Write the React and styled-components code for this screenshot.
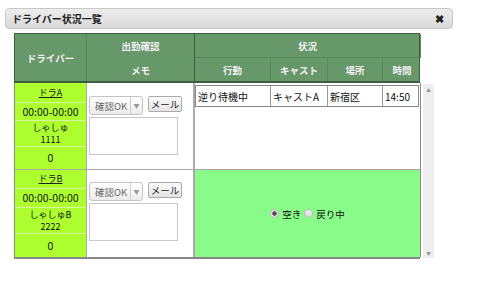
import React from "react";
import styled, { createGlobalStyle } from "styled-components";

const GlobalStyle = createGlobalStyle`
  body {
    margin: 0;
    background: #fff;
    font-family: "Noto Sans CJK JP", "Liberation Sans", sans-serif;
    font-size: 10px;
    color: #222;
  }
`;

const COLS = "72px 108px 76px 57px 55px 38px";

const Styled = {
  Page: styled.div`
    width: 500px;
    height: 300px;
    padding-top: 8px;
    box-sizing: border-box;
  `,
  TitleBar: styled.div`
    display: flex;
    align-items: center;
    justify-content: space-between;
    margin: 0 47px 0 5px;
    height: 21px;
    box-sizing: border-box;
    padding: 0 8px 0 6px;
    border: 1px solid #c8c8c8;
    border-radius: 4px;
    background: linear-gradient(#ededed, #d9d9d9);
    font-weight: bold;
    font-size: 10px;
    color: #222;
  `,
  Close: styled.span`
    font-size: 11px;
    font-weight: bold;
    line-height: 1;
  `,
  Content: styled.div`
    padding: 4px 0 0 14px;
  `,
  Header: styled.div`
    display: grid;
    grid-template-columns: ${COLS};
    grid-template-rows: 24px 23px;
    width: 406px;
    box-sizing: border-box;
    background: #67986a;
    border: 1px solid #3e5e40;
    border-bottom-width: 2px;
    color: #f2f2f2;
    font-weight: bold;
    font-size: 9.5px;
  `,
  HeadCell: styled.div`
    display: flex;
    align-items: center;
    justify-content: center;
    border-right: 1px solid ${(p) => (p.$strong ? "#3e5e40" : "#5a875d")};
    border-bottom: ${(p) => (p.$line ? "1px solid #5a875d" : "none")};
    grid-column: ${(p) => p.$col || "auto"};
    grid-row: ${(p) => p.$row || "auto"};
    &:last-child {
      border-right: none;
    }
  `,
  BodyRow: styled.div`
    display: flex;
    gap: 3px;
  `,
  Body: styled.div`
    display: grid;
    grid-template-columns: 72px 108px 226px;
    grid-template-rows: 87px 87px;
    width: 406px;
    box-sizing: border-box;
    border-left: 1px solid #888;
    border-bottom: 2px solid #888;
  `,
  DriverCell: styled.div`
    display: grid;
    grid-template-rows: ${(p) => p.$rows};
    background: #adff2f;
    border-right: 1px solid #aaa;
    border-bottom: ${(p) => (p.$last ? "none" : "1px solid #aaa")};
    overflow: hidden;
  `,
  DriverLine: styled.div`
    display: flex;
    flex-direction: column;
    align-items: center;
    justify-content: center;
    min-height: 0;
    line-height: 12px;
    font-size: ${(p) => (p.$small ? "9px" : "10.5px")};
    color: #111;
    border-bottom: 1px solid #d6f59c;
    &:last-child {
      border-bottom: none;
    }
  `,
  Link: styled.span`
    text-decoration: underline;
    font-size: 9px;
    color: #222;
  `,
  MemoCell: styled.div`
    display: flex;
    flex-direction: column;
    gap: 2px;
    padding: ${(p) => p.$pad} 0 0 2px;
    background: #fff;
    border-right: 2px solid #aaa;
    border-bottom: ${(p) => (p.$last ? "none" : "1px solid #aaa")};
  `,
  Controls: styled.div`
    display: flex;
    align-items: flex-start;
    gap: 5px;
  `,
  Select: styled.div`
    display: flex;
    width: 54px;
    height: 19px;
    box-sizing: border-box;
    border: 1px solid #c4c4c4;
    border-radius: 3px;
    background: linear-gradient(#fff, #ececec);
    color: #666;
    font-size: 9.5px;
  `,
  SelectText: styled.span`
    flex: 1;
    display: flex;
    align-items: center;
    padding-left: 5px;
  `,
  SelectArrow: styled.span`
    width: 11px;
    display: flex;
    align-items: center;
    justify-content: center;
    border-left: 1px solid #ccc;
    font-size: 6px;
    color: #999;
  `,
  Button: styled.div`
    display: flex;
    align-items: center;
    justify-content: center;
    width: 34px;
    height: 16px;
    box-sizing: border-box;
    border: 1px solid #aaa;
    border-radius: 2px;
    background: linear-gradient(#fafafa, #e4e4e4);
    font-size: 9.5px;
    color: #222;
  `,
  Memo: styled.div`
    width: 89px;
    height: 38px;
    box-sizing: border-box;
    border: 1px solid #c8c8c8;
    background: #fff;
  `,
  StatusCell: styled.div`
    background: ${(p) => (p.$free ? "#89fb89" : "#fff")};
    border-bottom: ${(p) => (p.$last ? "none" : "1px solid #aaa")};
    border-right: 1px solid #888;
    padding-top: ${(p) => (p.$free ? "0" : "2px")};
    display: ${(p) => (p.$free ? "flex" : "block")};
    align-items: center;
    justify-content: center;
  `,
  StatusTable: styled.div`
    display: grid;
    grid-template-columns: 75px 57px 55px 36px;
    height: 22px;
    width: 224px;
    box-sizing: border-box;
    border: 1px solid #888;
  `,
  StatusItem: styled.div`
    display: flex;
    align-items: center;
    padding-left: 2px;
    font-size: 10px;
    color: #111;
    border-right: 1px solid #999;
    &:last-child {
      border-right: none;
    }
  `,
  Radios: styled.div`
    display: flex;
    align-items: center;
    gap: 3px;
    font-size: 9.5px;
    color: #111;
  `,
  Radio: styled.span`
    width: 9px;
    height: 9px;
    box-sizing: border-box;
    border-radius: 50%;
    border: 1px solid #bbb;
    background: ${(p) =>
      p.$on
        ? "radial-gradient(circle, #555 0 2px, #eee 2.5px)"
        : "linear-gradient(#f4f4f4, #d8d8d8)"};
  `,
  Scrollbar: styled.div`
    width: 11px;
    height: 174px;
    margin-top: 1px;
    background: #efefef;
    display: flex;
    flex-direction: column;
    justify-content: space-between;
    align-items: center;
    padding: 2px 0;
    box-sizing: border-box;
    font-size: 5px;
    color: #999;
  `,
};

const drivers = [
  {
    name: "ドラA",
    car: ["しゃしゅ", "1111"],
    rows: "20px 18px 26px 1fr",
    pad: "13px",
    status: { kind: "busy", cols: ["逆り待機中", "キャストA", "新宿区", "14:50"] },
  },
  {
    name: "ドラB",
    car: ["しゃしゅB", "2222"],
    rows: "19px 19px 26px 1fr",
    pad: "12px",
    status: { kind: "free" },
  },
];

const App = () => {
  return (
    <Styled.Page>
      <GlobalStyle />
      <Styled.TitleBar>
        <span>ドライバー状況一覧</span>
        <Styled.Close>✖</Styled.Close>
      </Styled.TitleBar>
      <Styled.Content>
        <Styled.Header>
          <Styled.HeadCell $row="1 / 3" $col="1">ドライバー</Styled.HeadCell>
          <Styled.HeadCell $col="2" $row="1" $strong>出勤確認</Styled.HeadCell>
          <Styled.HeadCell $col="3 / 7" $row="1" $line>状況</Styled.HeadCell>
          <Styled.HeadCell $col="2" $row="2" $strong>メモ</Styled.HeadCell>
          <Styled.HeadCell $col="3" $row="2">行動</Styled.HeadCell>
          <Styled.HeadCell $col="4" $row="2">キャスト</Styled.HeadCell>
          <Styled.HeadCell $col="5" $row="2">場所</Styled.HeadCell>
          <Styled.HeadCell $col="6" $row="2">時間</Styled.HeadCell>
        </Styled.Header>
        <Styled.BodyRow>
          <Styled.Body>
            {drivers.map((d, i) => {
              const last = i === drivers.length - 1;
              return (
                <React.Fragment key={d.name}>
                  <Styled.DriverCell $rows={d.rows} $last={last}>
                    <Styled.DriverLine>
                      <Styled.Link>{d.name}</Styled.Link>
                    </Styled.DriverLine>
                    <Styled.DriverLine>00:00-00:00</Styled.DriverLine>
                    <Styled.DriverLine $small>
                      <span>{d.car[0]}</span>
                      <span>{d.car[1]}</span>
                    </Styled.DriverLine>
                    <Styled.DriverLine>0</Styled.DriverLine>
                  </Styled.DriverCell>
                  <Styled.MemoCell $pad={d.pad} $last={last}>
                    <Styled.Controls>
                      <Styled.Select>
                        <Styled.SelectText>確認OK</Styled.SelectText>
                        <Styled.SelectArrow>▼</Styled.SelectArrow>
                      </Styled.Select>
                      <Styled.Button>メール</Styled.Button>
                    </Styled.Controls>
                    <Styled.Memo />
                  </Styled.MemoCell>
                  {d.status.kind === "busy" ? (
                    <Styled.StatusCell $last={last}>
                      <Styled.StatusTable>
                        {d.status.cols.map((c) => (
                          <Styled.StatusItem key={c}>{c}</Styled.StatusItem>
                        ))}
                      </Styled.StatusTable>
                    </Styled.StatusCell>
                  ) : (
                    <Styled.StatusCell $free $last={last}>
                      <Styled.Radios>
                        <Styled.Radio $on />
                        <span>空き</span>
                        <Styled.Radio />
                        <span>戻り中</span>
                      </Styled.Radios>
                    </Styled.StatusCell>
                  )}
                </React.Fragment>
              );
            })}
          </Styled.Body>
          <Styled.Scrollbar>
            <span>▲</span>
            <span>▼</span>
          </Styled.Scrollbar>
        </Styled.BodyRow>
      </Styled.Content>
    </Styled.Page>
  );
};

export default App;
